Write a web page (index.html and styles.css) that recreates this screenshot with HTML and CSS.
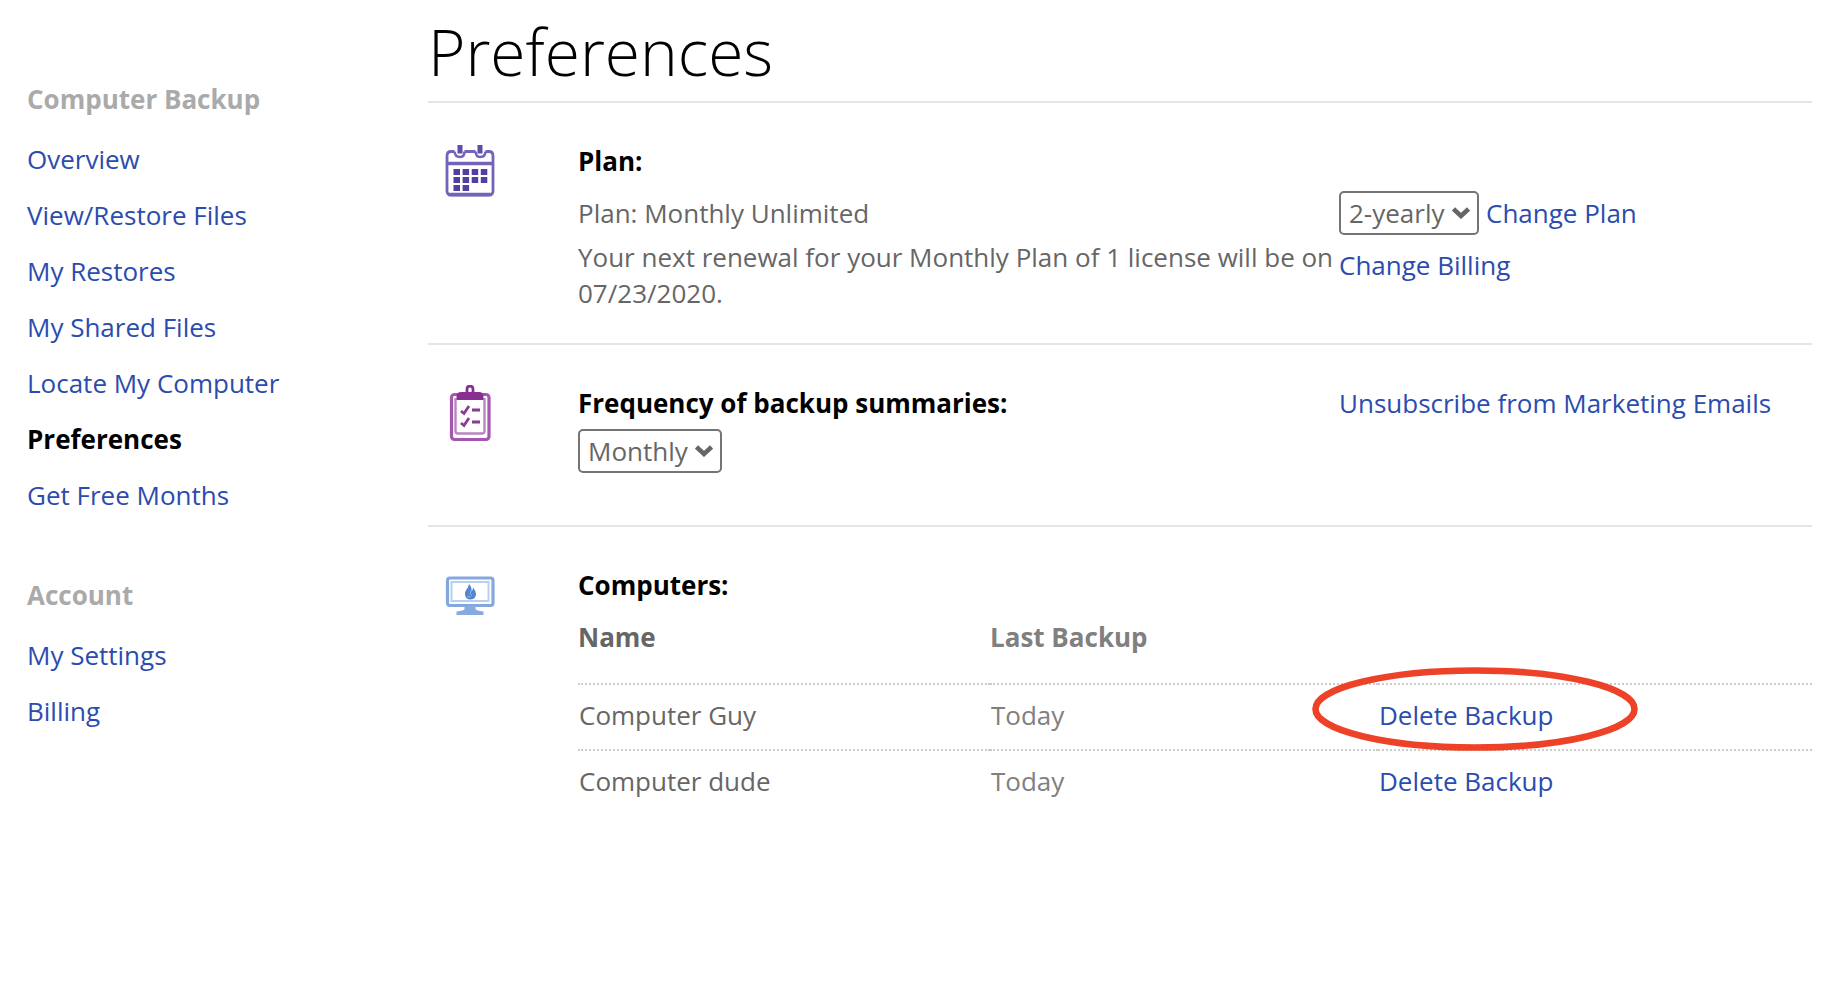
FILE: index.html
```html
<!DOCTYPE html>
<html lang="en">
<head>
<meta charset="utf-8">
<title>Preferences</title>
<link rel="stylesheet" href="styles.css">
</head>
<body>
<div class="page">
  <nav class="sidebar" aria-label="Account navigation">
    <section class="nav-group">
      <h2 class="nav-title">Computer Backup</h2>
      <ul class="nav-list">
        <li><a href="#overview">Overview</a></li>
        <li><a href="#files">View/Restore Files</a></li>
        <li><a href="#restores">My Restores</a></li>
        <li><a href="#shared">My Shared Files</a></li>
        <li><a href="#locate">Locate My Computer</a></li>
        <li><a class="current" href="#preferences" aria-current="page">Preferences</a></li>
        <li><a href="#free">Get Free Months</a></li>
      </ul>
    </section>
    <section class="nav-group">
      <h2 class="nav-title">Account</h2>
      <ul class="nav-list">
        <li><a href="#settings">My Settings</a></li>
        <li><a href="#billing">Billing</a></li>
      </ul>
    </section>
  </nav>

  <main class="main">
    <h1 class="title">Preferences</h1>

    <section class="panel panel-plan">
      <svg class="icon" width="52" height="56" viewBox="14 13 52 56" fill="none" stroke="#7463b6" aria-hidden="true">
        <path d="M24.500 21.500H21Q17 21.500 17 26V61Q17 65 21 65H59Q63 65 63 61V26Q63 21.500 59 21.500H55.500M34.500 21.500H45.500" stroke-width="2.800"/>
        <path d="M24.500 21.500Q25 27 30 27Q34.500 27 34.500 21.500M45.500 21.500Q46 27 50 27Q55.500 27 55.500 21.500" stroke-width="2.600"/>
        <path d="M30 15V23.500M50 15V23.500" stroke="#5f4dab" stroke-width="5"/>
        <path d="M17 33.500H63" stroke-width="3.500"/>
        <path d="M18 64.500H62" stroke-width="3.500"/>
        <path d="M23.500 42H58M23.500 50H58M23.500 58H40" stroke="#5140a2" stroke-width="6" stroke-dasharray="6.500 2.600"/>
      </svg>
      <div class="panel-body">
        <h2 class="heading">Plan:</h2>
        <div class="columns">
          <div>
            <p class="plan-row">Plan: Monthly Unlimited</p>
            <p class="renewal">Your next renewal for your Monthly Plan of 1 license will be on 07/23/2020.</p>
          </div>
          <div>
            <div class="plan-row">
              <span class="select-wrap">
                <select class="select" aria-label="New plan"><option>2-yearly</option></select>
                <svg class="chevron" width="18" height="12" viewBox="0 0 18 12" aria-hidden="true"><path d="M1.500 2L9 9L16.500 2" fill="none" stroke="#666" stroke-width="4.500"/></svg>
              </span>
              <a href="#change-plan">Change Plan</a>
            </div>
            <a class="billing-link" href="#change-billing">Change Billing</a>
          </div>
        </div>
      </div>
    </section>

    <section class="panel panel-frequency">
      <svg class="icon" width="52" height="58" viewBox="14 15 52 58" fill="none" stroke="#a357ae" aria-hidden="true">
        <rect x="21.500" y="24.500" width="37.500" height="45" rx="3" stroke-width="3.200"/>
        <path d="M25.500 28V61Q25.500 63.500 28 63.500H52Q54.500 63.500 54.500 61V28" stroke="#bb85c1" stroke-width="2.400"/>
        <path d="M26.500 30V27Q26.500 22 31 22H49Q53.500 22 53.500 27V30Z" fill="#892f92" stroke="none"/>
        <path d="M37 23V19Q37 16 40 16Q43 16 43 19V23" stroke="#892f92" stroke-width="2.800"/>
        <path d="M31 41L34 43.500L39 36M31 53L34 55.500L39 48M42 40H50M42 52H50" stroke="#8c3995" stroke-width="2.800"/>
      </svg>
      <div class="panel-body columns">
        <div>
          <h2 class="heading"><label for="frequency">Frequency of backup summaries:</label></h2>
          <span class="select-wrap">
            <select class="select" id="frequency"><option>Monthly</option></select>
            <svg class="chevron" width="18" height="12" viewBox="0 0 18 12" aria-hidden="true"><path d="M1.500 2L9 9L16.500 2" fill="none" stroke="#666" stroke-width="4.500"/></svg>
          </span>
        </div>
        <div><a href="#unsubscribe">Unsubscribe from Marketing Emails</a></div>
      </div>
    </section>

    <section class="panel panel-computers">
      <svg class="icon" width="52" height="52" viewBox="14 7 52 52" fill="none" aria-hidden="true">
        <rect x="17.500" y="18" width="45.500" height="27.500" rx="2.500" stroke="#84a8dd" stroke-width="3.200"/>
        <rect x="21.500" y="22" width="37" height="19" stroke="#b9cfee" stroke-width="2"/>
        <path d="M34.500 46H45.500V49Q46 50.500 53.500 51.500V55H26.500V51.500Q34 50.500 34.500 49Z" fill="#86abe0"/>
        <path d="M39 24Q38.500 27 36.500 29.500Q34.500 32 35 34.500Q35.500 39.500 40.500 39.500Q46 39 46 34Q46 31 43 27.500Q43 30 41.500 31Q42 27 39 24Z" fill="#5386cd"/>
        <path d="M41 31Q39 33.500 41.500 35.500M37 37Q39.500 36 40.500 37" stroke="#9dbbe6" stroke-width="1"/>
      </svg>
      <div class="panel-body">
        <h2 class="heading">Computers:</h2>
        <table class="computers">
          <thead>
            <tr><th class="col-name" scope="col">Name</th><th class="col-last" scope="col">Last Backup</th><td></td></tr>
          </thead>
          <tbody>
            <tr>
              <td>Computer Guy</td>
              <td class="last">Today</td>
              <td><span class="marked"><a href="#delete-guy">Delete Backup</a><svg class="ring" width="326" height="84" viewBox="0 0 326 84" aria-hidden="true"><ellipse cx="163" cy="42" rx="159.500" ry="38.500" fill="none" stroke="#ed4227" stroke-width="6.600"/></svg></span></td>
            </tr>
            <tr>
              <td>Computer dude</td>
              <td class="last">Today</td>
              <td><a href="#delete-dude">Delete Backup</a></td>
            </tr>
          </tbody>
        </table>
      </div>
    </section>
  </main>
</div>
</body>
</html>
```

FILE: styles.css
```css
* {
  box-sizing: border-box;
}

body {
  margin: 0;
  background: #fff;
  color: #666;
  font: 26px/36px "Open Sans", "Noto Sans", sans-serif;
}

h1,
h2,
p,
ul {
  margin: 0;
  padding: 0;
}

a {
  color: #2b4cae;
  text-decoration: none;
}

.page {
  display: grid;
  grid-template-columns: 401px 1fr;
  padding: 8px 13px 40px 27px;
}

.sidebar {
  display: flex;
  flex-direction: column;
  gap: 64px;
  padding-top: 73px;
}

.nav-title {
  margin-bottom: 24px;
  color: #aaa;
  font-size: 26px;
  font-weight: 700;
}

.nav-list {
  display: flex;
  flex-direction: column;
  gap: 20px;
  list-style: none;
}

.current {
  color: #000;
  font-weight: 700;
}

.title {
  padding-bottom: 5px;
  color: #000;
  font-size: 64px;
  font-weight: 300;
  line-height: 88px;
}

.panel {
  display: grid;
  grid-template-columns: 134px 1fr;
  padding: 40px 0 32px 16px;
  border-top: 2px solid #e5e5e5;
}

.panel-frequency {
  padding-bottom: 52px;
}

.icon {
  display: block;
}

.heading {
  color: #000;
  font-size: 26px;
  font-weight: 700;
}

.columns {
  display: grid;
  grid-template-columns: 761fr 473fr;
}

.panel-plan .columns {
  margin-top: 12px;
}

.plan-row {
  display: flex;
  align-items: center;
  gap: 7px;
  height: 44px;
}

.renewal {
  margin-top: 4px;
}

.billing-link {
  display: inline-block;
  margin-top: 12px;
}

.select-wrap {
  display: inline-flex;
  position: relative;
}

.panel-frequency .select-wrap {
  margin-top: 8px;
}

.select {
  appearance: none;
  height: 44px;
  margin: 0;
  padding: 0 32px 0 8px;
  border: 2px solid #757575;
  border-radius: 5px;
  background: #fff;
  color: #666;
  font: inherit;
}

.chevron {
  position: absolute;
  top: 16px;
  right: 9px;
  pointer-events: none;
}

.computers {
  width: 100%;
  margin-top: 16px;
  border-collapse: separate;
  border-spacing: 0;
  table-layout: fixed;
}

.computers th {
  padding: 0 0 28px;
  font-weight: 700;
  text-align: left;
}

.computers .col-name {
  width: 412px;
}

.computers .col-last {
  width: 388px;
  color: #808080;
}

.computers tbody td {
  padding: 12px 0 16px 1px;
  border-top: 2px dotted #ccc;
}

.computers .last {
  color: #808080;
}

.marked {
  position: relative;
}

.ring {
  position: absolute;
  top: -30px;
  left: -67px;
  pointer-events: none;
}
```
